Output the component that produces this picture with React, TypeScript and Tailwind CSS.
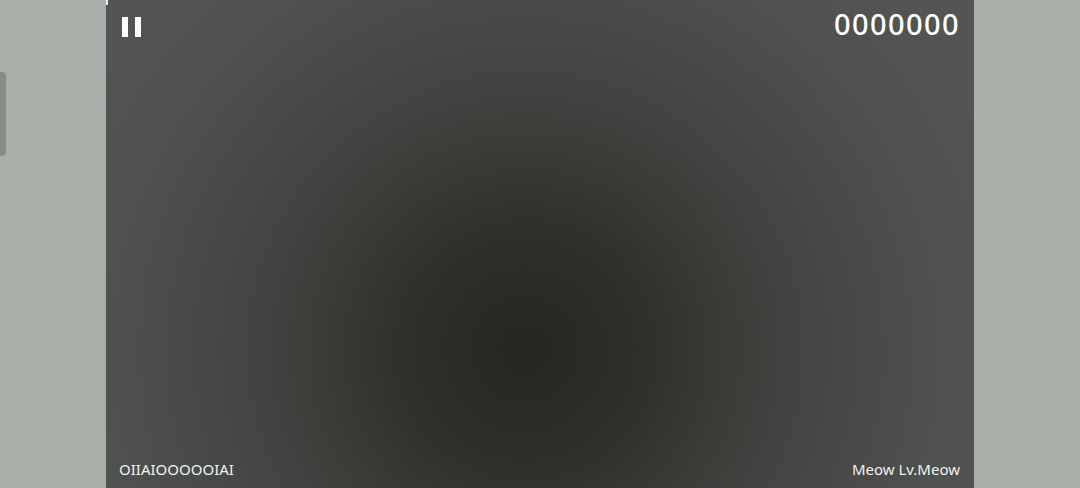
import React from "react";

function PauseIcon() {
  return (
    <div className="flex h-5 gap-[7px]">
      <span className="block h-5 w-[6px] bg-white" />
      <span className="block h-5 w-[6px] bg-white" />
    </div>
  );
}

export default function App() {
  return (
    <div
      className="flex h-[488px] w-full overflow-hidden bg-[#a9aea8] text-white"
      style={{ fontFamily: '"Noto Sans", "Open Sans", sans-serif' }}
    >
      {/* left rail with grab handle */}
      <div className="flex w-[106px] shrink-0 flex-col pt-[72px]">
        <div className="h-[84px] w-[6px] rounded-r-[4px] bg-[#878c86]" />
      </div>

      {/* game area */}
      <main className="relative flex w-[868px] shrink-0 flex-col justify-between bg-[radial-gradient(circle_at_48.3%_71.7%,#242721_0px,#2e312b_120px,#40433f_260px,#4e514e_420px,#525553_520px)]">
        <span className="absolute left-0 top-0 h-[5px] w-[2px] bg-white/90" />

        <header className="flex items-start justify-between pl-4 pr-[14px] pt-[17px]">
          <button className="block">
            <PauseIcon />
          </button>
          <div className="-mt-[13px] text-[29px] font-medium leading-[40px] tracking-[1.4px]">0000000</div>
        </header>

        <footer className="flex items-end justify-between pb-[9px] pl-[13px] pr-[14px] text-[15px] leading-5 text-white/95">
          <span>OIIAIOOOOOIAI</span>
          <span>Meow Lv.Meow</span>
        </footer>
      </main>

      <div className="w-[106px] shrink-0" />
    </div>
  );
}
